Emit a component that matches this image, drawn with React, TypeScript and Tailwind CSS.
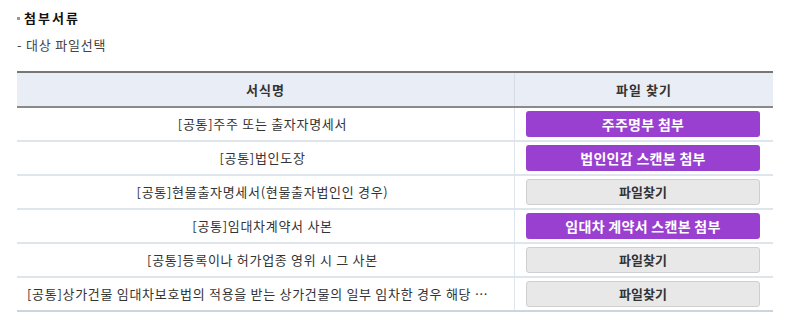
const FONT = "font-['Noto_Sans_CJK_KR','Noto_Sans',sans-serif]";

type Row = { name: string; button: string; primary: boolean };

const rows: Row[] = [
  { name: "[공통]주주 또는 출자자명세서", button: "주주명부 첨부", primary: true },
  { name: "[공통]법인도장", button: "법인인감 스캔본 첨부", primary: true },
  { name: "[공통]현물출자명세서(현물출자법인인 경우)", button: "파일찾기", primary: false },
  { name: "[공통]임대차계약서 사본", button: "임대차 계약서 스캔본 첨부", primary: true },
  { name: "[공통]등록이나 허가업종 영위 시 그 사본", button: "파일찾기", primary: false },
  {
    name: "[공통]상가건물 임대차보호법의 적용을 받는 상가건물의 일부 임차한 경우 해당 부분 도면",
    button: "파일찾기",
    primary: false,
  },
];

// Attachment section: heading, hint line, and a two-column table of file rows.
export default function App() {
  return (
    <div className={`${FONT} w-[789px] h-[332px] bg-white px-[17px] pt-[9px] text-[#333]`}>
      <div className="flex items-center gap-[4px] h-[18px]">
        <span className="inline-block h-[3px] w-[3px] bg-[#999]" />
        <span className="text-[13px] font-bold text-[#111] tracking-[2px]">첨부서류</span>
      </div>
      <div className="mt-[8px] h-[18px] text-[13px] text-[#444] tracking-[0.8px]">- 대상 파일선택</div>

      <div className="mt-[18px] w-[756px] border-t-2 border-[#777]">
        <div className="flex h-[35px] border-b-2 border-[#8a8a8a] bg-[#e9edf5] text-[13px] font-bold text-[#333] tracking-[1px]">
          <div className="flex w-[498px] items-center justify-center border-r border-[#d5dce4]">서식명</div>
          <div className="flex flex-1 items-center justify-center">파일 찾기</div>
        </div>
        {rows.map((r, i) => (
          <div
            key={i}
            className={`flex h-[34px] ${i === rows.length - 1 ? "border-b-2 border-[#cbd5de]" : "border-b-2 border-[#dfe5ec]"}`}
          >
            <div className="flex w-[498px] min-w-0 items-center justify-center border-r border-[#dfe5ec] pl-[10px] pr-[16px] text-[13px] text-[#333] tracking-[0.7px]">
              <span className="truncate">{r.name}</span>
            </div>
            <div className="flex flex-1 items-center pl-[11px]">
              {r.primary ? (
                <button className="h-[26px] w-[234px] rounded-[3px] bg-[#9a40d0] text-[14px] font-bold text-white tracking-[0.3px]">
                  {r.button}
                </button>
              ) : (
                <button className="h-[26px] w-[234px] rounded-[3px] border border-[#cfcfcf] bg-[#e8e8e8] text-[13px] font-bold text-[#333]">
                  {r.button}
                </button>
              )}
            </div>
          </div>
        ))}
      </div>
    </div>
  );
}
